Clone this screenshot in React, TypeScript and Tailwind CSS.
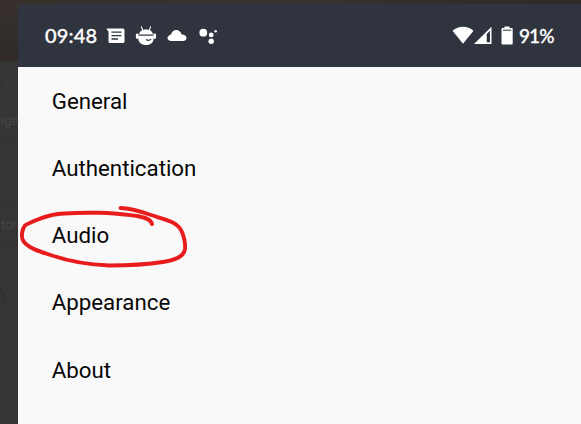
import React from "react";

const items = ["General", "Authentication", "Audio", "Appearance", "About"];

function MessageIcon() {
  return (
    <svg className="ml-[9px] h-5 w-5 shrink-0" viewBox="0 0 20 20">
      <path d="M.3 2.500H17a1.500 1.500 0 0 1 1.500 1.500V15.500a1.500 1.500 0 0 1-1.500 1.500H4a1.500 1.500 0 0 1-1.500-1.500V5.700Z" fill="#fff" />
      <path d="M5.500 6.200h10M5.500 9.600h10M5.500 13h6.500" stroke="#30343e" strokeWidth="1.300" />
    </svg>
  );
}

function RobotIcon() {
  return (
    <svg className="ml-[9px] h-5 w-[22px] shrink-0" viewBox="0 0 22 20">
      <path d="M6.500.8 7.800 5M15.500.8 14.200 5" stroke="#fff" strokeWidth="1.100" strokeLinecap="round" />
      <path d="M4 8.500C4.500 5 7.300 3.500 11 3.500s6.500 1.500 7 5Z" fill="#fff" />
      <path d="M3.300 9.200H18.700V12.500C18.700 16.500 15.500 19 11 19S3.300 16.500 3.300 12.500Z" fill="#fff" />
      <path d="M2.300 8.800v2.700M19.700 8.800v2.700" stroke="#fff" strokeWidth="2.800" strokeLinecap="round" />
      <path d="M3.800 9.500h14.400" stroke="#60646c" strokeWidth=".9" />
      <path d="M11 13.500c1.600 1.200 3.600 1.100 5.200-.4" fill="none" stroke="#30343e" strokeWidth="1.100" />
    </svg>
  );
}

function CloudIcon() {
  return (
    <svg className="ml-[10px] h-5 w-5 shrink-0" viewBox="0 0 20 20">
      <path d="M4.300 14.900C2 14.900.5 13.600.5 12S2 9.200 4 8.500C5 5.800 6.700 4.100 9.200 4.100c2.600 0 4.600 1.700 5.500 4.400 2.900.1 4.800 1.500 4.800 3.400s-1.500 3-3.600 3Z" fill="#fff" />
    </svg>
  );
}

function AssistantIcon() {
  return (
    <svg className="ml-[11px] h-5 w-5 shrink-0" viewBox="0 0 20 20">
      <g fill="#fff">
        <circle cx="5.300" cy="6.700" r="3.900" />
        <circle cx="13.200" cy="8.900" r="2.400" />
        <circle cx="17.600" cy="5.200" r="1.300" />
        <circle cx="13.200" cy="15.300" r="2.700" />
      </g>
    </svg>
  );
}

function WifiIcon() {
  return (
    <svg className="h-5 w-[22px] shrink-0" viewBox="0 0 22 20">
      <path d="M.5 4.800C6.500-.7 15.500-.7 21.500 4.800L11 17.800Z" fill="#fff" />
    </svg>
  );
}

function SignalIcon() {
  return (
    <svg className="h-5 w-[18px] shrink-0" viewBox="0 0 18 20">
      <path fillRule="evenodd" d="M17.500.7V18H0ZM12.700 8V16.300H16V4.700Z" fill="#fff" />
    </svg>
  );
}

function BatteryIcon() {
  return (
    <svg className="ml-[9px] h-5 w-3 shrink-0" viewBox="0 0 12 20">
      <path d="M3.500 2V.4h5V2h2.100c.7 0 1.100.4 1.100 1.100v14.400c0 .7-.4 1.100-1.100 1.100H1.600c-.7 0-1.100-.4-1.100-1.100V3.100C.5 2.400.9 2 1.600 2Z" fill="#fff" />
      <path d="M2 4.200h8.200" stroke="#30343e" strokeWidth="1" />
    </svg>
  );
}

function Backdrop() {
  return (
    <aside className="flex w-[18px] shrink-0 flex-col bg-[#353535] font-[Roboto,sans-serif] text-[#464646]">
      <div className="h-[61px] shrink-0 bg-gradient-to-b from-[#38312d] to-[#302b28]" />
      <div className="flex h-[79px] shrink-0 flex-col border-b border-[#303030] text-[13px]">
        <span className="mt-[15px] pl-[2px] leading-[16px] text-[#3c3c3c]">S</span>
        <span className="mt-[21px] -ml-[3px] leading-[16px]">nge</span>
      </div>
      <div className="h-[65px] shrink-0 border-b border-[#303030]" />
      <div className="flex h-[41px] shrink-0 items-center border-b border-[#303030] pl-px text-[13px]">tor</div>
      <div className="mt-[41px] -ml-[17px] h-[21px] w-[22px] shrink-0 rounded-full border border-[#292929]" />
    </aside>
  );
}

export default function App() {
  return (
    <div className="relative flex h-[424px] w-[581px] overflow-hidden bg-[#f9f9f9]">
      <Backdrop />
      <main className="flex flex-1 flex-col">
        <div className="h-1 bg-gradient-to-r from-[#382f2a] via-[#353330] to-[#302927]" />
        <header className="flex h-[63px] items-center justify-between bg-[#30343e] pr-[27px] pl-[27px] font-[Lato,sans-serif] text-[20px] font-medium text-white [-webkit-text-stroke:0.3px_white]">
          <div className="flex items-center">
            <span className="w-[52px] -translate-y-px tracking-[0.15px] whitespace-nowrap">09:48</span>
            <MessageIcon />
            <RobotIcon />
            <CloudIcon />
            <AssistantIcon />
          </div>
          <div className="flex items-center">
            <WifiIcon />
            <SignalIcon />
            <BatteryIcon />
            <span className="ml-[6px] w-[35px] translate-y-px tracking-[-0.9px] whitespace-nowrap text-[19px]">91%</span>
          </div>
        </header>
        <nav className="flex flex-col pt-px pl-[34px] font-[Roboto,sans-serif] text-[22.3px] text-[#080808]">
          {items.map((item) => (
            <div key={item} className="flex h-[67.2px] items-center">
              <span className="-ml-[0.3px]">{item}</span>
            </div>
          ))}
        </nav>
      </main>
      <svg className="absolute top-[195px] left-[10px] h-20 w-[190px]" viewBox="0 0 190 80" fill="none" stroke="#e81c1c" strokeWidth="3.900" strokeLinecap="round" strokeLinejoin="round">
        <path d="M110.500 13C121 13 131 16.500 141 20C155 24.500 166 26.500 171 35C174 40 175.500 49 175 54C174 62 165 65 153 67C137 69.500 119 70.500 99 70.500C74 69.500 58 66 42 60.500C29 56.500 17 52.500 13 45.500C11 41 12 34 15 30.500C18 28.500 31 22.500 40 20.500C54 17 72 18 90 17.700C107 18 118 20 127 21C135 22.500 141 24 142 29" />
      </svg>
    </div>
  );
}
